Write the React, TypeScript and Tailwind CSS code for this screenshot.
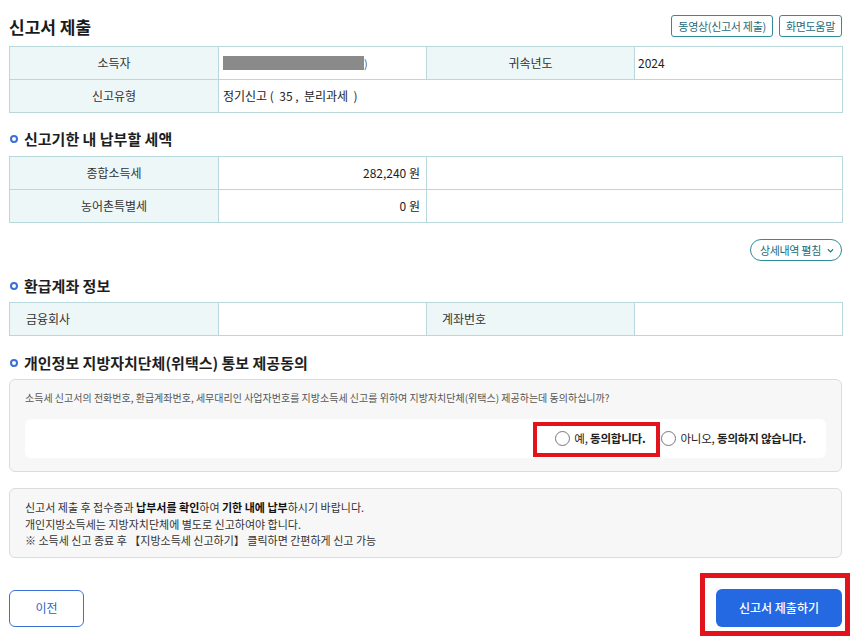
import React from "react";

const font = { fontFamily: '"Noto Sans CJK KR", "Noto Sans", sans-serif' };

function Bullet() {
  return <span className="inline-block w-[8px] h-[8px] rounded-full border-[2px] border-[#3a6fd8] mr-[6px]" />;
}

function Heading({ children, className }: { children: React.ReactNode; className: string }) {
  return (
    <div className={"flex items-center h-[20px] pl-[1px] text-[15px] font-bold text-[#1e1e1e] " + className}>
      <Bullet />
      {children}
    </div>
  );
}

const th = "border border-[#b8d8dc] bg-[#eef7f8] text-[12px] text-[#333] font-normal";
const td = "border border-[#b8d8dc] bg-white text-[12px] text-[#222]";

function Radio({ label, bold }: { label: string; bold: string }) {
  return (
    <label className="flex items-center gap-[4px] text-[11.5px] tracking-[-0.2px] text-[#222]">
      <span className="inline-block w-[15px] h-[15px] rounded-full border border-[#777] bg-white" />
      <span>
        {label}
        <b className="font-bold">{bold}</b>
      </span>
    </label>
  );
}

export default function App() {
  return (
    <div style={font} className="w-[853px] h-[643px] bg-white overflow-hidden">
      <div className="ml-[9px] w-[833px]">
        {/* header */}
        <div className="pt-[15px] flex items-center justify-between h-[37px]">
          <h1 className="text-[17px] font-bold text-[#1a1a1a] leading-none">신고서 제출</h1>
          <div className="flex gap-[6px]">
            <button className="h-[22px] px-[6px] border border-[#2f8c99] rounded-[3px] text-[11px] tracking-[-0.3px] text-[#1d6b78] bg-white">동영상(신고서 제출)</button>
            <button className="h-[22px] px-[6px] border border-[#2f8c99] rounded-[3px] text-[11px] tracking-[-0.3px] text-[#1d6b78] bg-white">화면도움말</button>
          </div>
        </div>

        {/* table 1 */}
        <table className="mt-[9px] w-[833px] table-fixed border-collapse">
          <colgroup>
            <col className="w-[209px]" />
            <col className="w-[208px]" />
            <col className="w-[208px]" />
            <col className="w-[208px]" />
          </colgroup>
          <tbody>
            <tr className="h-[33px]">
              <th className={th}>소득자</th>
              <td className={td + " pl-[4px]"}>
                <div className="flex items-center">
                  <span className="inline-block w-[141px] h-[14px] bg-[#8a8a8a]" />
                  <span className="text-[11px] text-[#555]">)</span>
                </div>
              </td>
              <th className={th}>귀속년도</th>
              <td className={td + " pl-[3px]"}>2024</td>
            </tr>
            <tr className="h-[33px]">
              <th className={th}>신고유형</th>
              <td className={td + " pl-[4px] whitespace-pre"} colSpan={3}>{"정기신고 (  35 ,  분리과세  )"}</td>
            </tr>
          </tbody>
        </table>

        <Heading className="mt-[16px]">신고기한 내 납부할 세액</Heading>

        <table className="mt-[7px] w-[833px] table-fixed border-collapse">
          <colgroup>
            <col className="w-[209px]" />
            <col className="w-[208px]" />
            <col className="w-[416px]" />
          </colgroup>
          <tbody>
            <tr className="h-[33px]">
              <th className={th}>종합소득세</th>
              <td className={td + " text-right pr-[6px]"}>282,240 원</td>
              <td className={td}></td>
            </tr>
            <tr className="h-[33px]">
              <th className={th}>농어촌특별세</th>
              <td className={td + " text-right pr-[6px]"}>0 원</td>
              <td className={td}></td>
            </tr>
          </tbody>
        </table>

        <div className="mt-[16px] flex justify-end">
          <button className="h-[22px] pl-[9px] pr-[6px] flex items-center gap-[5px] border border-[#2f8c99] rounded-full text-[11px] tracking-[-0.3px] text-[#1d6b78] bg-white">
            상세내역 펼침
            <svg width="9" height="9" viewBox="0 0 10 10" fill="none" stroke="#1d6b78" strokeWidth="1.4" strokeLinecap="round" strokeLinejoin="round">
              <path d="M2.5 4 L5 6.5 L7.5 4" />
            </svg>
          </button>
        </div>

        <Heading className="mt-[15px]">환급계좌 정보</Heading>

        <table className="mt-[6px] w-[833px] table-fixed border-collapse">
          <colgroup>
            <col className="w-[209px]" />
            <col className="w-[208px]" />
            <col className="w-[208px]" />
            <col className="w-[208px]" />
          </colgroup>
          <tbody>
            <tr className="h-[33px]">
              <th className={th + " text-left pl-[16px]"}>금융회사</th>
              <td className={td}></td>
              <th className={th + " text-left pl-[15px]"}>계좌번호</th>
              <td className={td}></td>
            </tr>
          </tbody>
        </table>

        <Heading className="mt-[17px]">개인정보 지방자치단체(위택스) 통보 제공동의</Heading>

        <div className="mt-[6px] h-[93px] bg-[#f7f7f7] border border-[#dcdcdc] rounded-[6px] px-[15px] pt-[10px]">
          <p className="text-[10px] leading-[16px] text-[#555]">
            소득세 신고서의 전화번호, 환급계좌번호, 세무대리인 사업자번호를 지방소득세 신고를 위하여 지방자치단체(위택스) 제공하는데 동의하십니까?
          </p>
          <div className="mt-[13px] h-[39px] bg-white rounded-[6px] flex items-center justify-end pr-[20px]">
            <div className="relative flex items-center">
              <span className="absolute left-[-22px] right-[-15px] top-[-8px] bottom-[-10px] border-[4px] border-[#e3131c] pointer-events-none" />
              <Radio label="예, " bold="동의합니다." />
            </div>
            <div className="ml-[16px]">
              <Radio label="아니오, " bold="동의하지 않습니다." />
            </div>
          </div>
        </div>

        <div className="mt-[16px] h-[70px] bg-[#f7f7f7] border border-[#dcdcdc] rounded-[6px] px-[15px] pt-[10px] text-[11px] leading-[16.5px] text-[#333]">
          <p>
            신고서 제출 후 접수증과 <b className="font-bold text-[#111]">납부서를 확인</b>하여 <b className="font-bold text-[#111]">기한 내에 납부</b>하시기 바랍니다.
          </p>
          <p>개인지방소득세는 지방자치단체에 별도로 신고하여야 합니다.</p>
          <p>※ 소득세 신고 종료 후 【지방소득세 신고하기】 클릭하면 간편하게 신고 가능</p>
        </div>

        <div className="mt-[31px] flex justify-between items-center">
          <button className="w-[75px] h-[37px] border border-[#3a70d8] rounded-[6px] text-[12px] text-[#2a5fc8] bg-white">이전</button>
          <div className="relative">
            <span className="absolute left-[-16px] right-[-8px] top-[-16px] bottom-[-9px] border-[5px] border-[#e3131c] pointer-events-none" />
            <button className="w-[126px] h-[38px] rounded-[6px] bg-[#2468e2] text-white text-[12px] font-medium">신고서 제출하기</button>
          </div>
        </div>
      </div>
    </div>
  );
}
